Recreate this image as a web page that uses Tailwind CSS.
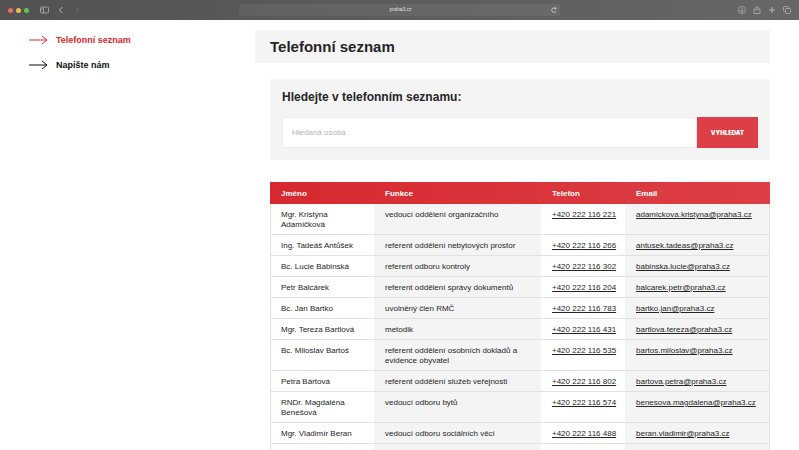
<!DOCTYPE html>
<html lang="cs">

<head>
  <meta charset="UTF-8">
  <meta name="viewport" content="width=device-width, initial-scale=1.0">
  <title>Telefonní seznam</title>
  <script src="https://cdn.jsdelivr.net/npm/@tailwindcss/browser@4"></script>
</head>

<body class="h-screen overflow-hidden bg-white font-['Liberation_Sans',sans-serif] text-[#252525]">
  <!-- Browser bar -->
  <header class="flex h-5 items-center bg-linear-to-r from-[#525252] to-[#676767] px-2 text-[#b4b4b4]">
    <div class="flex flex-1 items-center">
      <div class="flex gap-[3px]">
        <span class="size-[5px] rounded-full bg-[#ed6b60]"></span>
        <span class="size-[5px] rounded-full bg-[#f0bd50]"></span>
        <span class="size-[5px] rounded-full bg-[#62c655]"></span>
      </div>
      <button class="ml-[11px]" aria-label="Sidebar">
        <svg class="h-2 w-[9px]" viewBox="0 0 18 16" fill="none" stroke="currentColor" stroke-width="1.5"><rect x="1" y="2" width="16" height="12" rx="2" /><path d="M7 2v12M3 5h2M3 8h2" /></svg>
      </button>
      <button class="ml-2" aria-label="Back">
        <svg class="size-2" viewBox="0 0 16 16" fill="none" stroke="currentColor" stroke-width="2"><path d="M11 2L5 8l6 6" /></svg>
      </button>
      <button class="ml-2 text-[#6c6c6c]" aria-label="Forward">
        <svg class="size-2" viewBox="0 0 16 16" fill="none" stroke="currentColor" stroke-width="2"><path d="M5 2l6 6-6 6" /></svg>
      </button>
    </div>
    <div class="flex h-3 w-[41%] items-center rounded-xs bg-white/6 px-[3px] text-[5px] text-[#e0e0e0]">
      <span class="flex-1 pl-2 text-center">praha3.cz</span>
      <button aria-label="Reload">
        <svg class="size-[6px]" viewBox="0 0 12 12" fill="none" stroke="currentColor" stroke-width="1.5"><path d="M10 8.500A4.500 4.500 0 1 1 9.500 3.500M10 1v3H7" /></svg>
      </button>
    </div>
    <div class="flex flex-1 items-center justify-end gap-[7px]">
      <button aria-label="Downloads">
        <svg class="size-2" viewBox="0 0 16 16" fill="none" stroke="currentColor" stroke-width="1.500"><circle cx="8" cy="8" r="7" /><path d="M8 4v8M5 9l3 3 3-3" /></svg>
      </button>
      <button aria-label="Share">
        <svg class="size-2" viewBox="0 0 16 16" fill="none" stroke="currentColor" stroke-width="1.500"><path d="M6 6H2v9h12V6h-4M8 10V1M5 4l3-3 3 3" /></svg>
      </button>
      <button aria-label="New tab">
        <svg class="size-2" viewBox="0 0 16 16" fill="none" stroke="currentColor" stroke-width="2"><path d="M8 2v12M2 8h12" /></svg>
      </button>
      <button aria-label="Tabs">
        <svg class="size-2" viewBox="0 0 16 16" fill="none" stroke="currentColor" stroke-width="1.500"><rect x="5" y="5" width="10" height="10" rx="2" /><path d="M5 11H3a2 2 0 0 1-2-2V3a2 2 0 0 1 2-2h6a2 2 0 0 1 2 2v2" /></svg>
      </button>
    </div>
  </header>

  <div class="flex pt-[10px] pr-[29px]">
    <nav class="w-[255px] shrink-0 pl-[29px] text-[9px] leading-5 font-bold">
      <ul class="space-y-[5px]">
        <li>
          <a href="#" class="flex items-center gap-2 text-[#d7282f]">
            <svg class="h-[10px] w-[19px]" viewBox="0 0 19 10" fill="none" stroke="currentColor"><path d="M0 5h18M13 1l5 4-5 4" /></svg>
            Telefonní seznam
          </a>
        </li>
        <li>
          <a href="#" class="flex items-center gap-2 text-[#111111]">
            <svg class="h-[10px] w-[19px]" viewBox="0 0 19 10" fill="none" stroke="currentColor"><path d="M0 5h18M13 1l5 4-5 4" /></svg>
            Napište nám
          </a>
        </li>
      </ul>
    </nav>

    <main class="min-w-0 flex-1">
      <h1 class="bg-[#f4f4f4] px-[15px] py-2 text-[15px] leading-[17px] font-bold">Telefonní seznam</h1>

      <form class="mt-4 ml-[15px] bg-[#f4f4f4] px-3 pt-[10px] pb-3">
        <h2 class="text-[12px] leading-4 font-bold"><label for="person">Hledejte v telefonním seznamu:</label></h2>
        <div class="mt-3 flex h-[31px]">
          <input id="person" type="text" placeholder="Hledaná osoba" class="min-w-0 flex-1 border border-[#ececec] bg-white px-[9px] text-[8px] placeholder:text-[#b5b5b5]">
          <button type="submit" class="w-[61px] bg-[#dc3f45] font-['Inter',sans-serif] text-[6px] font-black text-white">VYHLEDAT</button>
        </div>
      </form>

      <div class="mt-[22px] ml-[15px]">
        <table class="w-full table-fixed border-separate border-spacing-0 text-left text-[8px] leading-[10px] [&_td]:border-b [&_td]:border-[#e2e2e2] [&_td]:px-[11px] [&_td]:pt-[6px] [&_td]:pb-[4px] [&_td]:align-top [&_td:first-child]:border-l [&_td:first-child]:pl-[10px] [&_td:nth-child(even)]:bg-[#f4f4f4] [&_td:last-child]:border-r [&_td:nth-child(n+3)]:whitespace-nowrap">
          <colgroup>
            <col class="w-[104px]">
            <col>
            <col class="w-[84px]">
            <col class="w-[145px]">
          </colgroup>
          <thead class="bg-linear-to-r from-[#d7282f] to-[#dc3f45] text-white [&_th]:px-[11px] [&_th]:pt-[7px] [&_th]:pb-[5px]">
            <tr>
              <th>Jméno</th>
              <th>Funkce</th>
              <th>Telefon</th>
              <th>Email</th>
            </tr>
          </thead>
          <tbody id="people" class="[&_a]:underline"></tbody>
        </table>
      </div>
    </main>
  </div>

  <script>
    const people = [
      ['Mgr. Kristýna Adamíčková', 'vedoucí oddělení organizačního', '+420 222 116 221', 'adamickova.kristyna@praha3.cz'],
      ['Ing. Tadeáš Antůšek', 'referent oddělení nebytových prostor', '+420 222 116 266', 'antusek.tadeas@praha3.cz'],
      ['Bc. Lucie Babinská', 'referent odboru kontroly', '+420 222 116 302', 'babinska.lucie@praha3.cz'],
      ['Petr Balcárek', 'referent oddělení správy dokumentů', '+420 222 116 204', 'balcarek.petr@praha3.cz'],
      ['Bc. Jan Bartko', 'uvolněný člen RMČ', '+420 222 116 783', 'bartko.jan@praha3.cz'],
      ['Mgr. Tereza Bartlová', 'metodik', '+420 222 116 431', 'bartlova.tereza@praha3.cz'],
      ['Bc. Miloslav Bartoš', 'referent oddělení osobních dokladů a evidence obyvatel', '+420 222 116 535', 'bartos.miloslav@praha3.cz'],
      ['Petra Bártová', 'referent oddělení služeb veřejnosti', '+420 222 116 802', 'bartova.petra@praha3.cz'],
      ['RNDr. Magdaléna Benešová', 'vedoucí odboru bytů', '+420 222 116 574', 'benesova.magdalena@praha3.cz'],
      ['Mgr. Vladimír Beran', 'vedoucí odboru sociálních věcí', '+420 222 116 488', 'beran.vladimir@praha3.cz'],
    ];

    document.getElementById('people').innerHTML = people.map(([name, role, phone, email]) => `
      <tr>
        <td>${name}</td>
        <td>${role}</td>
        <td><a href="tel:${phone.replaceAll(' ', '')}">${phone}</a></td>
        <td><a href="mailto:${email}">${email}</a></td>
      </tr>`).join('') + '<tr class="h-5"><td></td><td></td><td></td><td></td></tr>';
  </script>
</body>

</html>
